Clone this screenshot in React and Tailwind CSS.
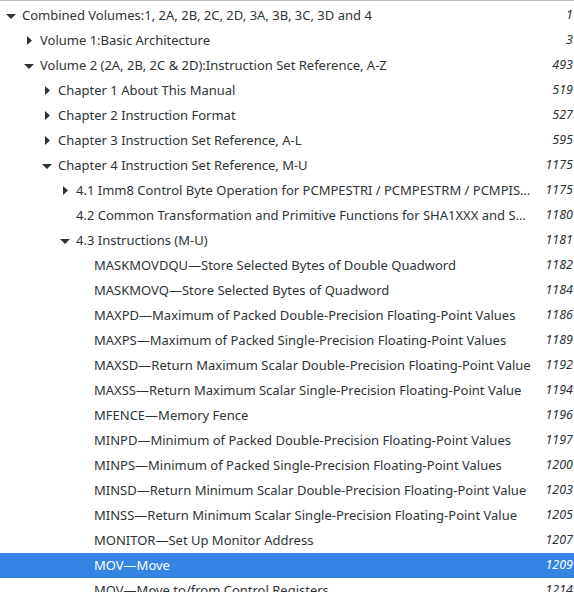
import React from 'react'

const ROWS = [
  { lvl: 0, exp: 'down',  text: 'Combined Volumes:1, 2A, 2B, 2C, 2D, 3A, 3B, 3C, 3D and 4', page: '1' },
  { lvl: 1, exp: 'right', text: 'Volume 1:Basic Architecture', page: '3' },
  { lvl: 1, exp: 'down',  text: 'Volume 2 (2A, 2B, 2C & 2D):Instruction Set Reference, A-Z', page: '493' },
  { lvl: 2, exp: 'right', text: 'Chapter 1 About This Manual', page: '519' },
  { lvl: 2, exp: 'right', text: 'Chapter 2 Instruction Format', page: '527' },
  { lvl: 2, exp: 'right', text: 'Chapter 3 Instruction Set Reference, A-L', page: '595' },
  { lvl: 2, exp: 'down',  text: 'Chapter 4 Instruction Set Reference, M-U', page: '1175' },
  { lvl: 3, exp: 'right', text: '4.1 Imm8 Control Byte Operation for PCMPESTRI / PCMPESTRM / PCMPIS…', page: '1175' },
  { lvl: 3, exp: null,    text: '4.2 Common Transformation and Primitive Functions for SHA1XXX and S…', page: '1180' },
  { lvl: 3, exp: 'down',  text: '4.3 Instructions (M-U)', page: '1181' },
  { lvl: 4, text: 'MASKMOVDQU—Store Selected Bytes of Double Quadword', page: '1182' },
  { lvl: 4, text: 'MASKMOVQ—Store Selected Bytes of Quadword', page: '1184' },
  { lvl: 4, text: 'MAXPD—Maximum of Packed Double-Precision Floating-Point Values', page: '1186' },
  { lvl: 4, text: 'MAXPS—Maximum of Packed Single-Precision Floating-Point Values', page: '1189' },
  { lvl: 4, text: 'MAXSD—Return Maximum Scalar Double-Precision Floating-Point Value', page: '1192' },
  { lvl: 4, text: 'MAXSS—Return Maximum Scalar Single-Precision Floating-Point Value', page: '1194' },
  { lvl: 4, text: 'MFENCE—Memory Fence', page: '1196' },
  { lvl: 4, text: 'MINPD—Minimum of Packed Double-Precision Floating-Point Values', page: '1197' },
  { lvl: 4, text: 'MINPS—Minimum of Packed Single-Precision Floating-Point Values', page: '1200' },
  { lvl: 4, text: 'MINSD—Return Minimum Scalar Double-Precision Floating-Point Value', page: '1203' },
  { lvl: 4, text: 'MINSS—Return Minimum Scalar Single-Precision Floating-Point Value', page: '1205' },
  { lvl: 4, text: 'MONITOR—Set Up Monitor Address', page: '1207' },
  { lvl: 4, text: 'MOV—Move', page: '1209', selected: true },
  { lvl: 4, text: 'MOV—Move to/from Control Registers', page: '1214' },
]

const INDENT = ['pl-[3px]', 'pl-[21px]', 'pl-[39px]', 'pl-[57px]', 'pl-[75px]']

function Expander({ dir }) {
  if (dir === 'down') return (
    <svg width="16" height="16" viewBox="0 0 16 16" className="shrink-0">
      <polygon points="3,6 13,6 8,11" fill="#2e3436" />
    </svg>
  )
  if (dir === 'right') return (
    <svg width="16" height="16" viewBox="0 0 16 16" className="shrink-0">
      <polygon points="6,3 11,7.5 6,12" fill="#2e3436" />
    </svg>
  )
  return <div className="w-4 h-4 shrink-0" />
}

export default function App() {
  return (
    <div className="w-[574px] h-[592px] overflow-hidden bg-white border-t border-[#c0bfbc] pt-[2px] text-[13px] text-[#2e3436]"
      style={{ fontFamily: '"Noto Sans", "Open Sans", sans-serif' }}>
      {ROWS.map((r, i) => (
        <div key={i} className={`flex items-center h-[25px] pr-px ${INDENT[r.lvl]} ${r.selected ? 'bg-[#3584e4] text-white' : ''}`}>
          <Expander dir={r.exp} />
          <span className="ml-[3px] flex-1 min-w-0 truncate whitespace-nowrap">{r.text}</span>
          <span className="pl-3 italic shrink-0 text-right text-[12.5px]">{r.page}</span>
        </div>
      ))}
    </div>
  )
}
